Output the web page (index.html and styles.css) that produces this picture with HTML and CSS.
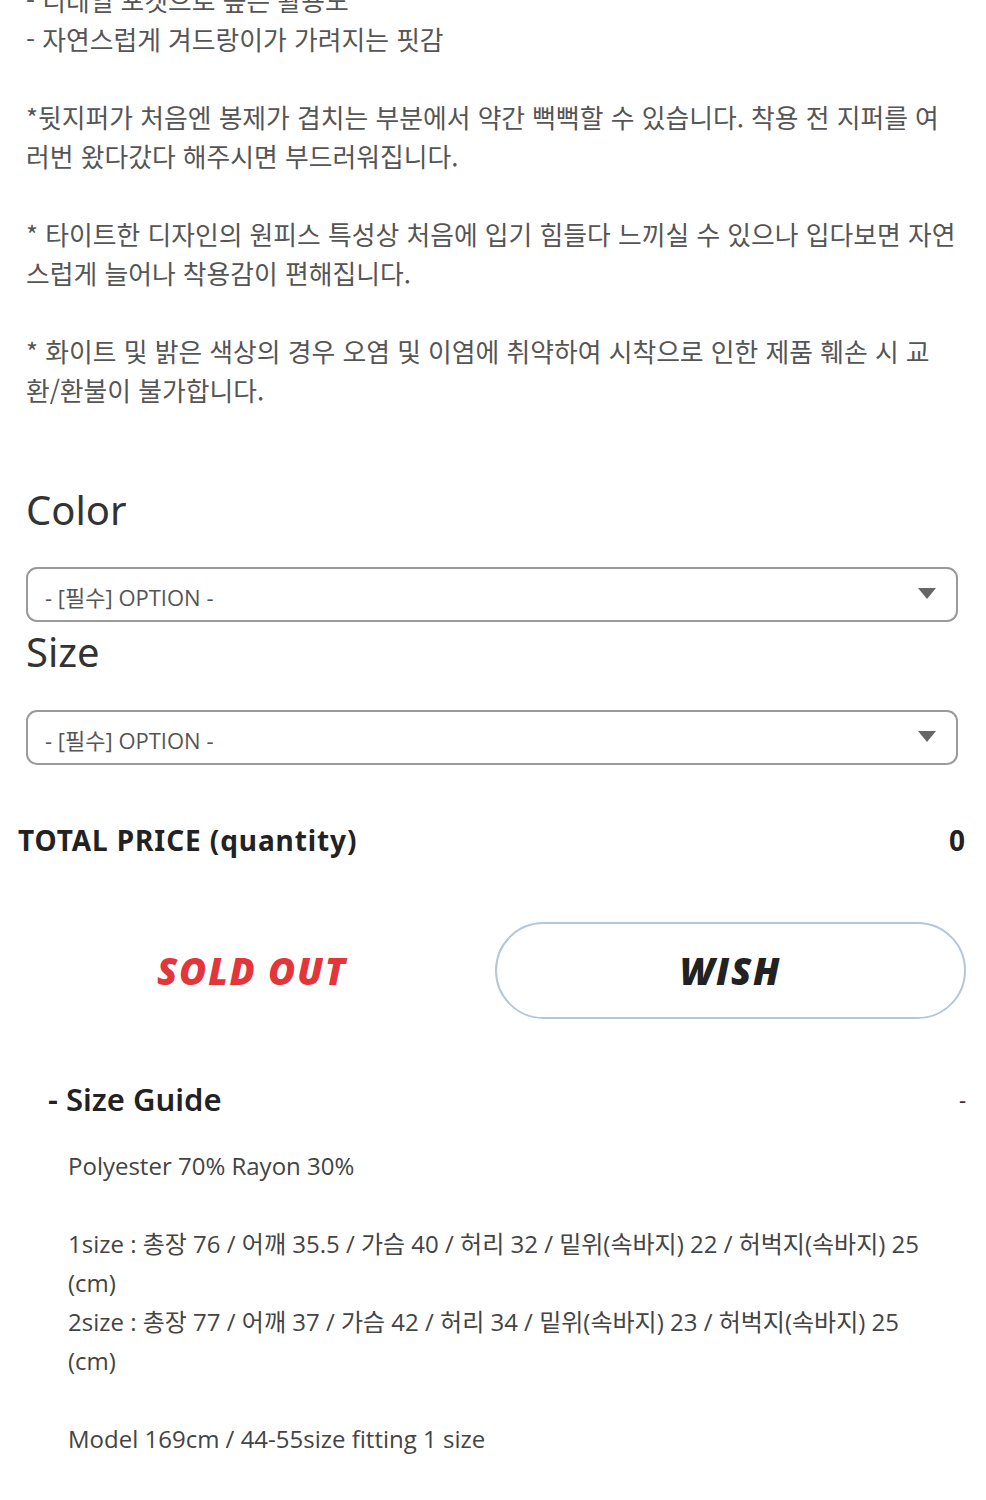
FILE: index.html
```html
<!DOCTYPE html>
<html lang="ko">
<head>
<meta charset="utf-8">
<title>Product detail</title>
<link rel="stylesheet" href="styles.css">
</head>
<body>
<div class="page">
  <section class="desc">
    <p>- 디테일 포켓으로 높은 활용도<br>- 자연스럽게 겨드랑이가 가려지는 핏감</p>
    <p>*뒷지퍼가 처음엔 봉제가 겹치는 부분에서 약간 뻑뻑할 수 있습니다. 착용 전 지퍼를 여<br>러번 왔다갔다 해주시면 부드러워집니다.</p>
    <p>* 타이트한 디자인의 원피스 특성상 처음에 입기 힘들다 느끼실 수 있으나 입다보면 자연<br>스럽게 늘어나 착용감이 편해집니다.</p>
    <p>* 화이트 및 밝은 색상의 경우 오염 및 이염에 취약하여 시착으로 인한 제품 훼손 시 교<br>환/환불이 불가합니다.</p>
  </section>

  <section class="options">
    <div class="opt-label opt-label-first">Color</div>
    <div class="select"><span>- [필수] OPTION -</span><i class="caret"></i></div>
    <div class="opt-label">Size</div>
    <div class="select"><span>- [필수] OPTION -</span><i class="caret"></i></div>
  </section>

  <div class="total"><span>TOTAL PRICE (quantity)</span><span>0</span></div>

  <div class="actions">
    <div class="soldout">SOLD OUT</div>
    <div class="wish">WISH</div>
  </div>

  <div class="guide-head"><span>- Size Guide</span><span class="dash">-</span></div>
  <div class="guide-body">
    <p>Polyester 70% Rayon 30%</p>
    <p>1size : 총장 76 / 어깨 35.5 / 가슴 40 / 허리 32 / 밑위(속바지) 22 / 허벅지(속바지) 25<br>(cm)<br>2size : 총장 77 / 어깨 37 / 가슴 42 / 허리 34 / 밑위(속바지) 23 / 허벅지(속바지) 25<br>(cm)</p>
    <p>Model 169cm / 44-55size fitting 1 size</p>
  </div>
</div>
</body>
</html>
```

FILE: styles.css
```css
html, body {
  margin: 0;
  padding: 0;
  background: #fff;
}
body {
  font-family: "Noto Sans CJK KR", "Noto Sans", sans-serif;
  color: #555;
  overflow: hidden;
}
.page {
  width: 986px;
}
.desc {
  margin-top: -20px;
  padding: 0 26px;
  font-size: 25.8px;
  line-height: 39px;
  color: #555;
  white-space: nowrap;
}
.desc p {
  margin: 0 0 39px 0;
}
.desc p:last-child {
  margin-bottom: 0;
}
.options {
  padding: 0 28px 0 26px;
}
.opt-label {
  font-family: "Noto Sans", sans-serif;
  font-size: 40px;
  line-height: 50px;
  color: #333;
  font-weight: 400;
  margin-top: 5px;
  margin-bottom: 33px;
}
.opt-label-first {
  margin-top: 76px;
  margin-bottom: 32px;
}
.select {
  height: 55px;
  box-sizing: border-box;
  border: 2px solid #9a9a9a;
  border-radius: 11px;
  display: flex;
  align-items: center;
  justify-content: space-between;
  padding: 0 20px 0 17px;
  font-family: "Open Sans", "Noto Sans CJK KR", sans-serif;
  font-size: 22px;
  color: #555;
}
.select span {
  padding-top: 2px;
}
.caret {
  width: 0;
  height: 0;
  border-left: 9px solid transparent;
  border-right: 9px solid transparent;
  border-top: 11px solid #666;
  margin-bottom: 3px;
}
.total {
  margin-top: 55px;
  padding: 0 20px 0 18px;
  display: flex;
  justify-content: space-between;
  align-items: center;
  font-family: "Noto Sans", sans-serif;
  font-weight: 700;
  font-size: 28px;
  letter-spacing: 0.9px;
  line-height: 40px;
  color: #222;
}
.actions {
  margin-top: 62px;
  padding: 0 20px 0 18px;
  display: grid;
  grid-template-columns: 468px 1fr;
  gap: 9px;
  height: 97px;
}
.soldout, .wish {
  display: flex;
  align-items: center;
  justify-content: center;
  font-family: "Open Sans", sans-serif;
  font-weight: 800;
  font-style: italic;
  font-size: 37px;
  letter-spacing: 1.8px;
}
.soldout {
  color: #e2363a;
}
.wish {
  box-sizing: border-box;
  border: 2px solid #b3c6dc;
  border-radius: 49px;
  color: #222;
}
.guide-head {
  margin-top: 60px;
  padding: 0 20px 0 48px;
  display: flex;
  justify-content: space-between;
  align-items: center;
  font-family: "Noto Sans", sans-serif;
  font-weight: 600;
  font-size: 31px;
  line-height: 40px;
  color: #222;
}
.guide-head .dash {
  font-weight: 400;
  font-size: 22px;
  color: #333;
}
.guide-body {
  margin-top: 27px;
  padding: 0 20px 0 68px;
  font-family: "Open Sans", "Noto Sans CJK KR", sans-serif;
  font-size: 24px;
  line-height: 39px;
  color: #444;
  white-space: nowrap;
}
.guide-body p {
  margin: 0 0 39px 0;
}
```
